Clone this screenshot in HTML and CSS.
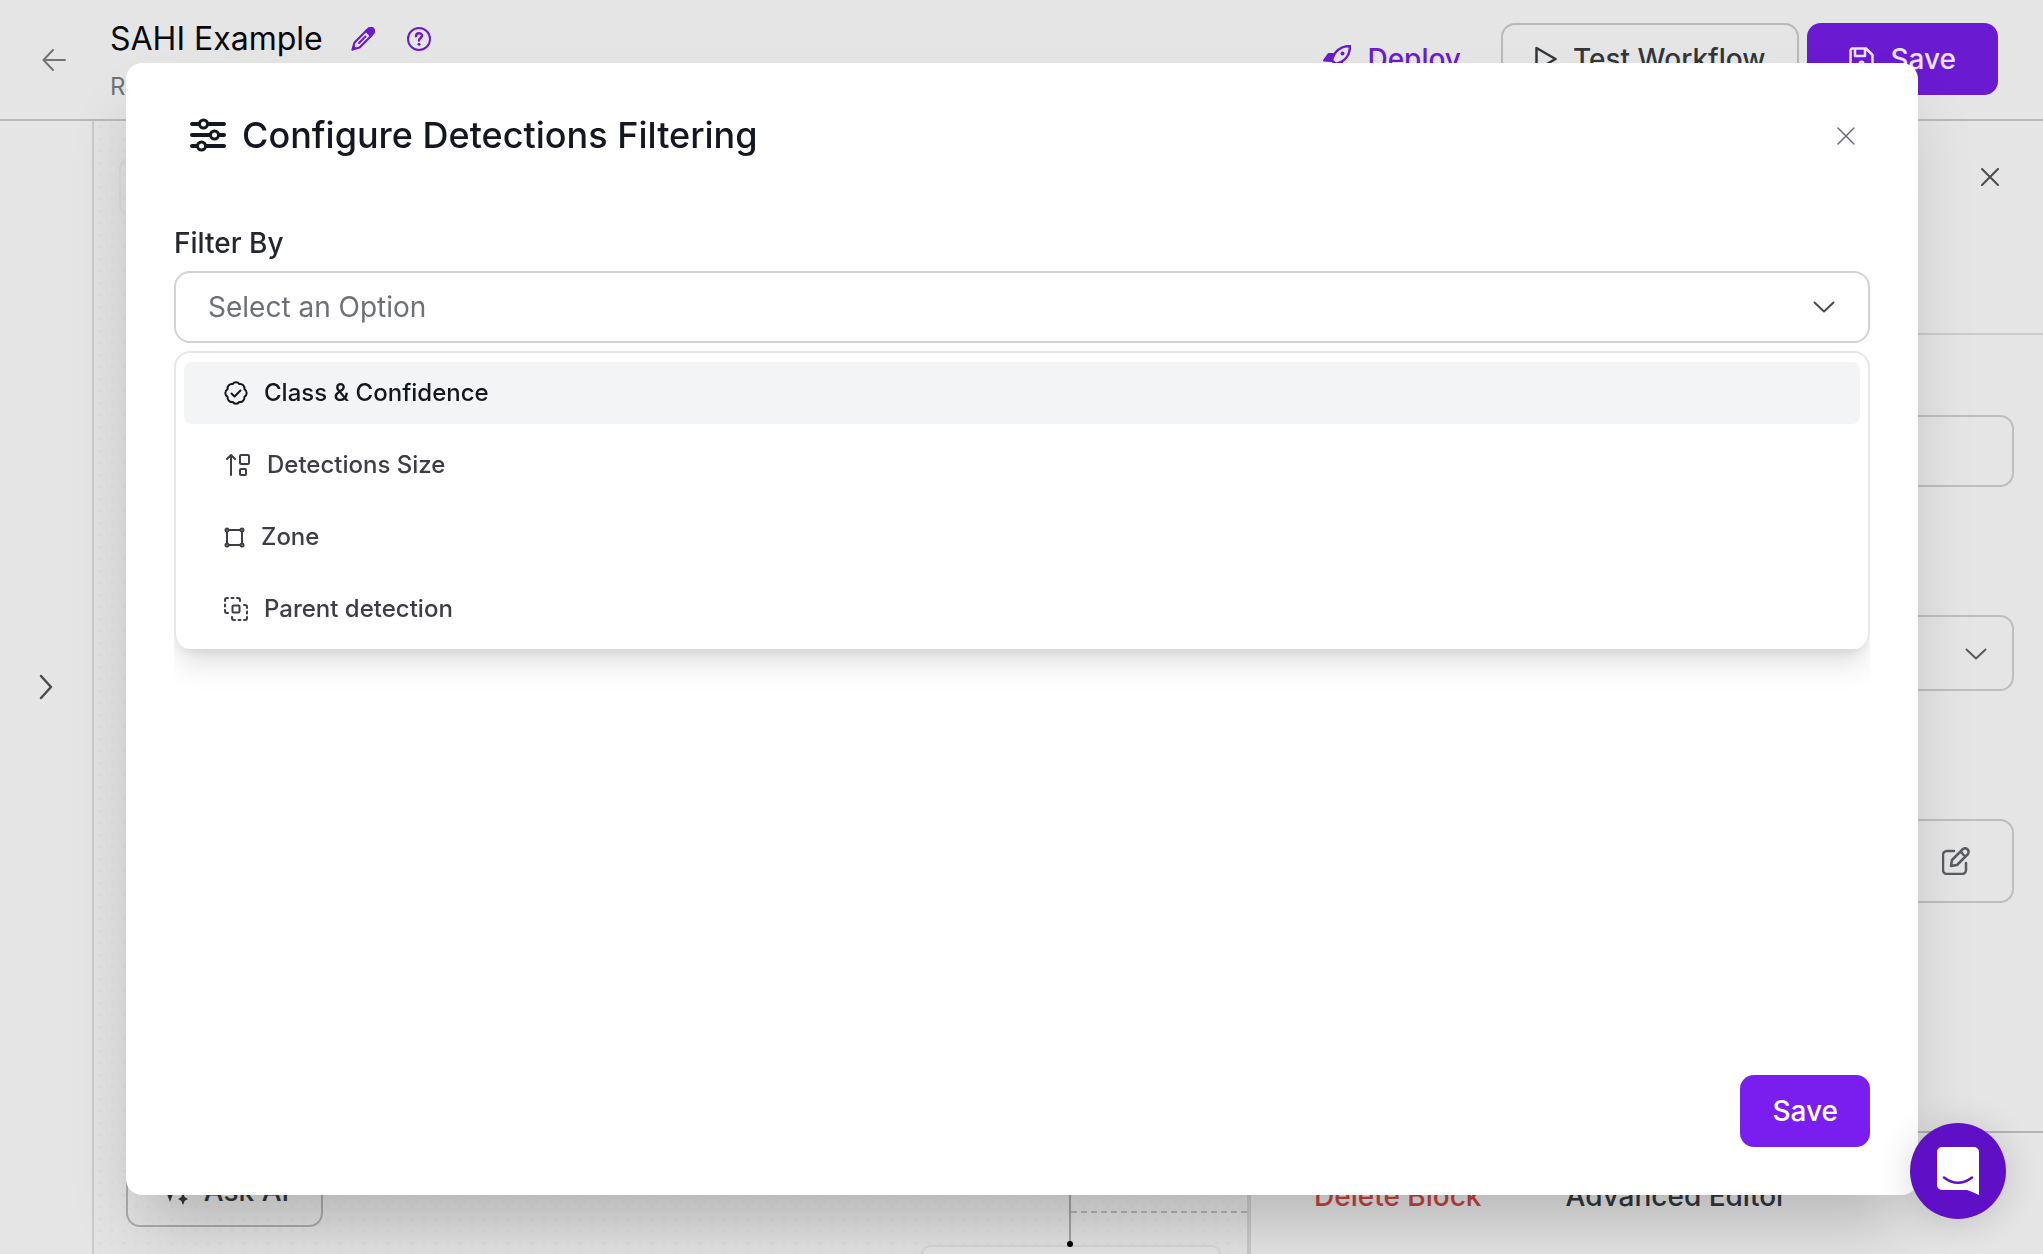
FILE: index.html
```html
<!DOCTYPE html>
<html lang="en">
<head>
<meta charset="utf-8">
<title>SAHI Example</title>
<link rel="stylesheet" href="styles.css">
</head>
<body>
<div class="app">
  <header class="topbar">
    <button class="icon-btn back" aria-label="Back"><svg width="24" height="22" viewBox="0 0 24 22" class="line"><path d="M23 11H1.500M11 1L1.500 11l9.500 10"/></svg></button>
    <div class="heading">
      <div class="name-row">
        <h1>SAHI Example</h1>
        <button class="icon-btn purple" aria-label="Rename"><svg width="24" height="24" viewBox="0 0 24 24"><path d="M3.500 15.500L15.500 3.500l5 5-12 12-7 2z" fill="none" stroke="currentColor" stroke-width="2.200" stroke-linejoin="round"/><path d="M13.500 4l3-3a4 4 0 0 1 6.500 6l-3 3.500zM2.500 18L.5 23.800 6 21.800z" fill="currentColor"/><path d="M8 16l6.500-6.500" stroke="currentColor" stroke-width="2" stroke-linecap="round"/></svg></button>
        <button class="icon-btn purple" aria-label="Help"><svg width="24" height="24" viewBox="0 0 24 24" class="line"><circle cx="12" cy="12" r="11"/><path d="M9 9.200c.2-4 6-3.800 6-.4 0 2.200-3 2.200-3 4.700" stroke-width="2.400"/><circle cx="12" cy="17.300" r="1.500" fill="currentColor" stroke="none"/></svg></button>
      </div>
      <p class="sub">R</p>
    </div>
    <div class="actions">
      <button class="btn ghost"><svg width="28" height="28" viewBox="0 0 28 28" class="line"><path d="M9 15.500C11 7 17 1 27 1c0 10-6 16-14.500 18z" stroke-width="2.500"/><path d="M10.500 9H5.500L1 15.500l7 .5zM19 17.500V22.500L12.500 27l-.5-7z" fill="currentColor"/><circle cx="19.500" cy="8.500" r="2" fill="currentColor" stroke="none"/></svg>Deploy</button>
      <button class="btn outline"><svg width="22" height="26" viewBox="0 0 22 26" class="line"><path d="M1.500 2v22L20.500 13z" stroke-width="2.500"/></svg>Test Workflow</button>
      <button class="btn primary"><svg width="25" height="25" viewBox="0 0 25 25" class="line"><path d="M3.500 1.500h13.500L23.500 8v13.500a2 2 0 0 1-2 2h-18a2 2 0 0 1-2-2v-18a2 2 0 0 1 2-2zM6 2v7h10V2" stroke-width="2.500"/><circle cx="12.500" cy="16.500" r="3" fill="currentColor" stroke="none"/></svg>Save</button>
    </div>
  </header>
  <div class="workspace">
    <nav class="rail"><button class="icon-btn" aria-label="Expand"><svg width="14" height="26" viewBox="0 0 14 26" class="line"><path d="M2 2l10 11L2 24" stroke-width="2.500"/></svg></button></nav>
    <section class="canvas">
      <div class="tool"></div>
      <div class="edge-down"></div>
      <div class="edge-side"></div>
      <div class="node"></div>
      <div class="port"></div>
      <button class="btn outline ask"><svg width="28" height="28" viewBox="0 0 28 28" fill="currentColor"><path d="M10 3l3 8 7 3-7 3-3 8-3-8-7-3 7-3zM23 16l1.800 4.200L28 22l-3.200 1.800L23 28l-1.800-4.200L18 22l3.200-1.800z"/></svg>Ask AI</button>
    </section>
    <aside class="panel">
      <div class="panel-head"><button class="icon-btn" aria-label="Close panel"><svg width="18" height="18" viewBox="0 0 18 18" class="line"><path d="M1 1l16 16M17 1L1 17"/></svg></button></div>
      <div class="panel-body">
        <input class="field" type="text" aria-label="Name">
        <button class="field pick" aria-label="Choose"><svg width="22" height="12" viewBox="0 0 22 12" class="line"><path d="M1.500 1.500L11 10.500l9.500-9"/></svg></button>
        <button class="field edit" aria-label="Edit operations"><svg width="28" height="28" viewBox="0 0 28 28" class="line"><path d="M12 4H5a4 4 0 0 0-4 4v15a4 4 0 0 0 4 4h15a4 4 0 0 0 4-4v-7" stroke-width="2.500"/><path d="M9 19l1-6L21 2c3-2 7 1 5 5L15 18zM18.500 4.500l4.500 5" stroke-width="2.500"/></svg></button>
      </div>
      <footer class="panel-foot"><button class="text-btn danger">Delete Block</button><button class="text-btn">Advanced Editor</button></footer>
    </aside>
  </div>
</div>

<div class="overlay">
  <div class="modal" role="dialog" aria-labelledby="dlg-title">
    <div class="modal-head">
      <svg width="36" height="34" viewBox="0 0 36 34" class="line"><g stroke-width="4"><path d="M2 6h7M18 6h16M2 17h18M29 17h5M2 28h5M16 28h18"/></g><g stroke-width="3"><circle cx="13.500" cy="6" r="4"/><circle cx="24.500" cy="17" r="4"/><circle cx="11.500" cy="28" r="4"/></g></svg>
      <h2 id="dlg-title">Configure Detections Filtering</h2>
      <button class="icon-btn dim" aria-label="Close"><svg width="18" height="18" viewBox="0 0 18 18" class="line"><path d="M1 1l16 16M17 1L1 17" stroke-width="1.500"/></svg></button>
    </div>
    <div class="modal-body">
      <label class="label" id="filter-label" for="filter">Filter By</label>
      <button class="select" id="filter" aria-haspopup="listbox" aria-expanded="true">Select an Option<svg width="22" height="12" viewBox="0 0 22 12" class="line"><path d="M1.500 1.500L11 10.500l9.500-9"/></svg></button>
      <div class="menu-clip">
        <ul class="menu" role="listbox" aria-labelledby="filter-label">
          <li class="option active" role="option" aria-selected="true"><svg width="24" height="24" viewBox="0 0 24 24" class="line"><path d="M12 1.200q2.200 0 3.400 1.900 2.300-.4 3.800 1.200 1.600 1.500 1.200 3.800 2.300 1.500 2.300 3.900t-2.300 3.900q.4 2.300-1.200 3.800-1.500 1.600-3.800 1.200-1.200 1.900-3.400 1.900t-3.400-1.900q-2.300.4-3.800-1.200-1.600-1.500-1.200-3.800-2.300-1.500-2.300-3.900t2.300-3.900q-.4-2.300 1.200-3.800 1.500-1.600 3.800-1.200 1.200-1.900 3.400-1.900z"/><path d="M7.500 12.500l3 3 6-6"/></svg>Class &amp; Confidence</li>
          <li class="option" role="option"><svg width="27" height="24" viewBox="0 0 27 24" class="line"><path d="M7 22V2M3 6l4-4 4 4"/><rect x="16" y="2" width="9" height="9" rx="1"/><rect x="16" y="16" width="6" height="6" rx="1"/></svg>Detections Size</li>
          <li class="option" role="option"><svg width="21" height="21" viewBox="0 0 21 21" class="line"><path d="M5 3h11M5 18h11M3 5v11M18 5v11"/><circle cx="3" cy="3" r="1.500"/><circle cx="18" cy="3" r="1.500"/><circle cx="3" cy="18" r="1.500"/><circle cx="18" cy="18" r="1.500"/></svg>Zone</li>
          <li class="option" role="option"><svg width="24" height="24" viewBox="0 0 24 24" class="line"><path d="M1 4V3a2 2 0 0 1 2-2h1M7.500 1h2M13 1h1a2 2 0 0 1 2 2v1M1 7.500v2M1 13v1a2 2 0 0 0 2 2h1M20 8h1a2 2 0 0 1 2 2v1M23 14.500v2M23 20v1a2 2 0 0 1-2 2h-1M16.500 23h-2M11 23h-1a2 2 0 0 1-2-2v-1"/><rect x="8.500" y="8.500" width="7" height="7" rx="1"/></svg>Parent detection</li>
        </ul>
      </div>
    </div>
    <div class="modal-foot"><button class="btn primary">Save</button></div>
  </div>
</div>

<button class="chat" aria-label="Open chat"><svg width="42" height="48" viewBox="0 0 42 48"><path fill="#fff" d="M5 0h32a5 5 0 0 1 5 5v43q-6-3-12-5H5a5 5 0 0 1-5-5V5a5 5 0 0 1 5-5z"/><path d="M7 30.500q14 10.500 28 0" fill="none" stroke="#5f10c6" stroke-width="2.600" stroke-linecap="round"/></svg></button>
</body>
</html>
```
FILE: styles.css
```css
* { box-sizing: border-box; }
body {
  margin: 0;
  font-family: Inter, sans-serif;
  font-size: 28px;
  line-height: 36px;
  color: #33363b;
  background: #e5e5e5;
}
h1, h2, p, ul { margin: 0; padding: 0; }
button, input { font: inherit; color: inherit; background: none; border: 0; padding: 0; }
svg { display: block; flex: none; }
.line { fill: none; stroke: currentColor; stroke-width: 2; stroke-linecap: round; stroke-linejoin: round; }

.app { display: flex; flex-direction: column; height: 100vh; overflow: hidden; }

.topbar {
  display: flex;
  justify-content: space-between;
  flex: none;
  height: 121px;
  padding: 0 45px 0 42px;
  border-bottom: 2px solid #b9b9b9;
}
.icon-btn { display: flex; align-items: center; justify-content: center; color: #4a4b4e; }
.purple { color: #6a1bd1; }
.dim { color: #6a6c70; }
.back { color: #737373; }
.heading { flex: 1; padding: 20px 0 0 44px; }
.name-row { display: flex; align-items: center; gap: 28px; height: 38px; }
.name-row .icon-btn + .icon-btn { padding-left: 4px; }
.name-row h1 { font-size: 32px; font-weight: 400; line-height: 40px; color: #08080a; }
.sub { padding-top: 13px; font-size: 24px; line-height: 32px; color: #707276; }
.actions { display: flex; padding-top: 23px; gap: 8px; }

.btn {
  display: flex;
  align-items: center;
  justify-content: center;
  gap: 16px;
  height: 72px;
  padding: 0 32px;
  border-radius: 14px;
  font-weight: 500;
}
.ghost { color: #6a1bd1; }
.outline { border: 2px solid #b9b9b9; }
.primary { color: #fff; background: #7a1ef0; }
.topbar .primary { padding: 0 42px; color: #ece3fa; background: #6a1bd1; }

.workspace { display: flex; flex: 1; min-height: 0; }
.rail {
  display: flex;
  justify-content: center;
  flex: none;
  width: 94px;
  padding-bottom: 2px;
  border-right: 2px solid #cbcbcb;
}
.canvas {
  position: relative;
  flex: 1;
  background-color: #e3e3e3;
  background-image: radial-gradient(circle, #dedede 1px, transparent 2px);
  background-size: 12px 12px;
}
.tool {
  position: absolute;
  left: 25px;
  top: 36px;
  width: 60px;
  height: 60px;
  border: 2px solid #dddddd;
  border-radius: 12px;
}
.ask { position: absolute; left: 32px; bottom: 27px; width: 197px; padding: 0; border-color: #acacac; }
.edge-down { position: absolute; left: 975px; bottom: 10px; height: 80px; border-left: 2px solid #a3a3a3; }
.edge-side { position: absolute; left: 977px; right: 0; bottom: 41px; border-top: 2px dashed #b4b4b4; }
.node {
  position: absolute;
  left: 827px;
  bottom: 0;
  width: 300px;
  height: 9px;
  border: 2px solid #d8d8d8;
  border-bottom: 0;
  border-radius: 12px 12px 0 0;
  background: #e5e5e5;
}
.port { position: absolute; left: 973px; bottom: 7px; width: 6px; height: 6px; border-radius: 50%; background: #000; }

.panel {
  display: flex;
  flex-direction: column;
  flex: none;
  width: 796px;
  border-left: 4px solid #cacaca;
  background: #e5e5e5;
}
.panel-head {
  display: flex;
  align-items: flex-start;
  justify-content: flex-end;
  height: 214px;
  padding: 47px 44px 0;
  border-bottom: 2px solid #cbcbcb;
}
.panel-body { display: flex; flex-direction: column; flex: 1; gap: 128px; padding: 80px 29px 0; }
.field {
  display: flex;
  align-items: center;
  justify-content: flex-end;
  width: 100%;
  height: 72px;
  border: 2px solid #bebebe;
  border-radius: 14px;
}
.pick { height: 76px; padding: 2px 25px 0 0; color: #5a5b5e; }
.edit { height: 84px; padding-right: 42px; color: #5a5c61; }
.panel-foot {
  display: flex;
  gap: 84px;
  flex: none;
  height: 123px;
  padding: 45px 63px 0;
  border-top: 2px solid #b4b4b4;
}
.text-btn { height: 36px; font-weight: 500; }
.danger { color: #c2443f; }

.overlay { position: fixed; inset: 0; padding: 63px 125px 59px 126px; }
.modal {
  display: flex;
  flex-direction: column;
  height: 100%;
  border-radius: 16px;
  background: #fff;
  box-shadow: 0 40px 64px -16px rgba(0, 0, 0, .22);
}
.modal-head { display: flex; align-items: center; gap: 16px; padding: 48px 63px 0 64px; color: #14171f; }
.modal-head .icon-btn { padding-top: 2px; }
.modal-head h2 { flex: 1; font-size: 36px; font-weight: 500; line-height: 48px; }
.modal-body { display: flex; flex-direction: column; flex: 1; padding: 66px 48px 0; }
.label { font-weight: 500; color: #24272e; }
.select {
  display: flex;
  align-items: center;
  justify-content: space-between;
  height: 72px;
  margin-top: 10px;
  padding: 0 33px 0 32px;
  border: 2px solid #d3d3d3;
  border-radius: 16px;
  color: #6d7074;
}
.select svg { color: #4a4b4e; }
.menu-clip { overflow: hidden; padding: 8px 0 48px; }
.menu {
  display: flex;
  flex-direction: column;
  gap: 10px;
  padding: 9px 8px;
  list-style: none;
  border: 2px solid #e7e7e7;
  border-bottom: 0;
  border-radius: 16px;
  box-shadow: 0 20px 30px -5px rgba(0, 0, 0, .12), 0 8px 12px -6px rgba(0, 0, 0, .1);
}
.option {
  display: flex;
  align-items: center;
  gap: 16px;
  height: 62px;
  padding: 0 40px;
  border-radius: 8px;
  font-size: 24px;
  font-weight: 500;
  color: #3c3e43;
}
.active { color: #14171c; background: #f3f4f6; }
.modal-foot { display: flex; justify-content: flex-end; padding: 0 48px 48px; }

.chat {
  position: fixed;
  right: 37px;
  bottom: 35px;
  display: flex;
  align-items: center;
  justify-content: center;
  width: 96px;
  height: 96px;
  border-radius: 50%;
  background: #5f10c6;
  box-shadow: 0 4px 36px rgba(0, 0, 0, .16);
}
```
